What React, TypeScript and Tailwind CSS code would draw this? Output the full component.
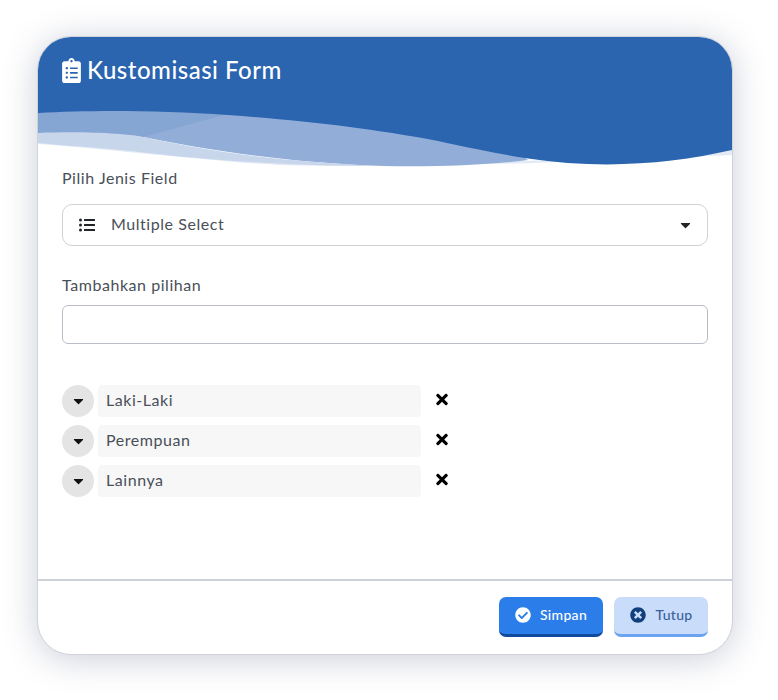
import { useState } from "react";
import { FaCaretDown, FaCheckCircle, FaClipboardList, FaListUl, FaTimes, FaTimesCircle } from "react-icons/fa";

const OPTIONS = ["Laki-Laki", "Perempuan", "Lainnya"];

const Wave = () => (
  <svg viewBox="0 -1 694 130" preserveAspectRatio="none" className="absolute inset-0 h-full w-full">
    <rect y="-1" width="694" height="130" fill="#ffffff" />
    <path d="M0 95C60 108 170 115 280 125C330 129 430 128 694 112V117C480 127 330 130 240 127C160 122 60 110 0 106Z" fill="#e3eaf5" />
    <path d="M0 95C50 95 90 96 105 99C170 112 250 125 345 128C400 129 450 127 490 122L400 60L0 60Z" fill="#92aed8" />
    <path d="M0 60H190V76L105 99C90 96 50 95 0 95Z" fill="#85a5d3" />
    <path d="M0 95C50 93 90 96 105 99C150 108 210 122 345 128C250 128 170 122 110 115C70 110 30 108 0 105Z" fill="#c8d6ec" />
    <path d="M0 -1H694V112C650 122 600 128 550 126C500 124 460 116 400 103C330 90 270 83 190 77C120 72 50 72 0 75Z" fill="#2b64af" />
  </svg>
);

export default function App() {
  const [value, setValue] = useState("");

  return (
    <div className="h-[700px] w-[778px] bg-white pl-[37px] pt-[36px] font-['Lato',sans-serif] text-[16px] tracking-[0.55px] text-[#495057]">
      <div className="flex h-[619px] w-[696px] flex-col overflow-hidden rounded-[34px] border border-[#cfd2d9] bg-white shadow-[0_4px_34px_rgba(70,80,120,0.28)]">
        <div className="relative h-[130px] shrink-0">
          <Wave />
          <div className="relative flex items-center gap-[6px] pl-[24px] pt-[18px] text-[24px] font-medium leading-[30px] tracking-[0.5px] text-white">
            <FaClipboardList className="h-[25px] w-[19px]" />
            Kustomisasi Form
          </div>
        </div>

        <div className="flex flex-1 flex-col px-[24px]">
          <label className="leading-[22px]">Pilih Jenis Field</label>
          <div className="mt-[15px] flex h-[42px] items-center rounded-[10px] border border-[#ced1d6] px-[16px]">
            <FaListUl className="h-[16px] w-[16px] text-[#212529]" />
            <span className="ml-[16px] flex-1 pb-[2px]">Multiple Select</span>
            <FaCaretDown className="h-[16px] w-[11px] text-[#212529]" />
          </div>

          <label className="mt-[28px] leading-[22px]">Tambahkan pilihan</label>
          <input
            value={value}
            onChange={(e) => setValue(e.target.value)}
            className="mt-[9px] h-[39px] w-full rounded-[6px] border border-[#b9bdc6] outline-none"
          />

          <div className="mt-[41px] flex flex-col gap-[8px]">
            {OPTIONS.map((option) => (
              <div key={option} className="flex h-[32px] items-center">
                <button className="flex h-[32px] w-[32px] items-center justify-center rounded-full bg-[#e4e4e4] text-[#111]">
                  <FaCaretDown className="h-[16px] w-[11px]" />
                </button>
                <div className="ml-[4px] flex h-[32px] w-[323px] items-center rounded-[4px] bg-[#f7f7f7] px-[8px] pb-[2px]">{option}</div>
                <FaTimes className="ml-[15px] mb-[3px] h-[17px] w-[12px] text-black" />
              </div>
            ))}
          </div>

          <div className="flex-1" />
        </div>

        <div className="flex h-[75px] shrink-0 justify-end gap-[11px] border-t-2 border-[#cdd0d4] px-[24px] pt-[16px]">
          <button className="flex h-[40px] w-[104px] items-center justify-center gap-[9px] rounded-[7px] border-b-[3px] border-[#0f4a9c] bg-[#2b7de9] pb-[2px] text-[14px] font-medium tracking-[0.3px] text-white">
            <FaCheckCircle className="h-[16px] w-[16px]" />
            Simpan
          </button>
          <button className="flex h-[40px] w-[94px] items-center justify-center gap-[10px] rounded-[7px] border-b-[3px] border-[#6ba3f0] bg-[#c9dcf9] pb-[2px] text-[14px] font-medium tracking-[0.3px] text-[#3a5f9c]">
            <FaTimesCircle className="h-[16px] w-[16px] text-[#123f7e]" />
            Tutup
          </button>
        </div>
      </div>
    </div>
  );
}
